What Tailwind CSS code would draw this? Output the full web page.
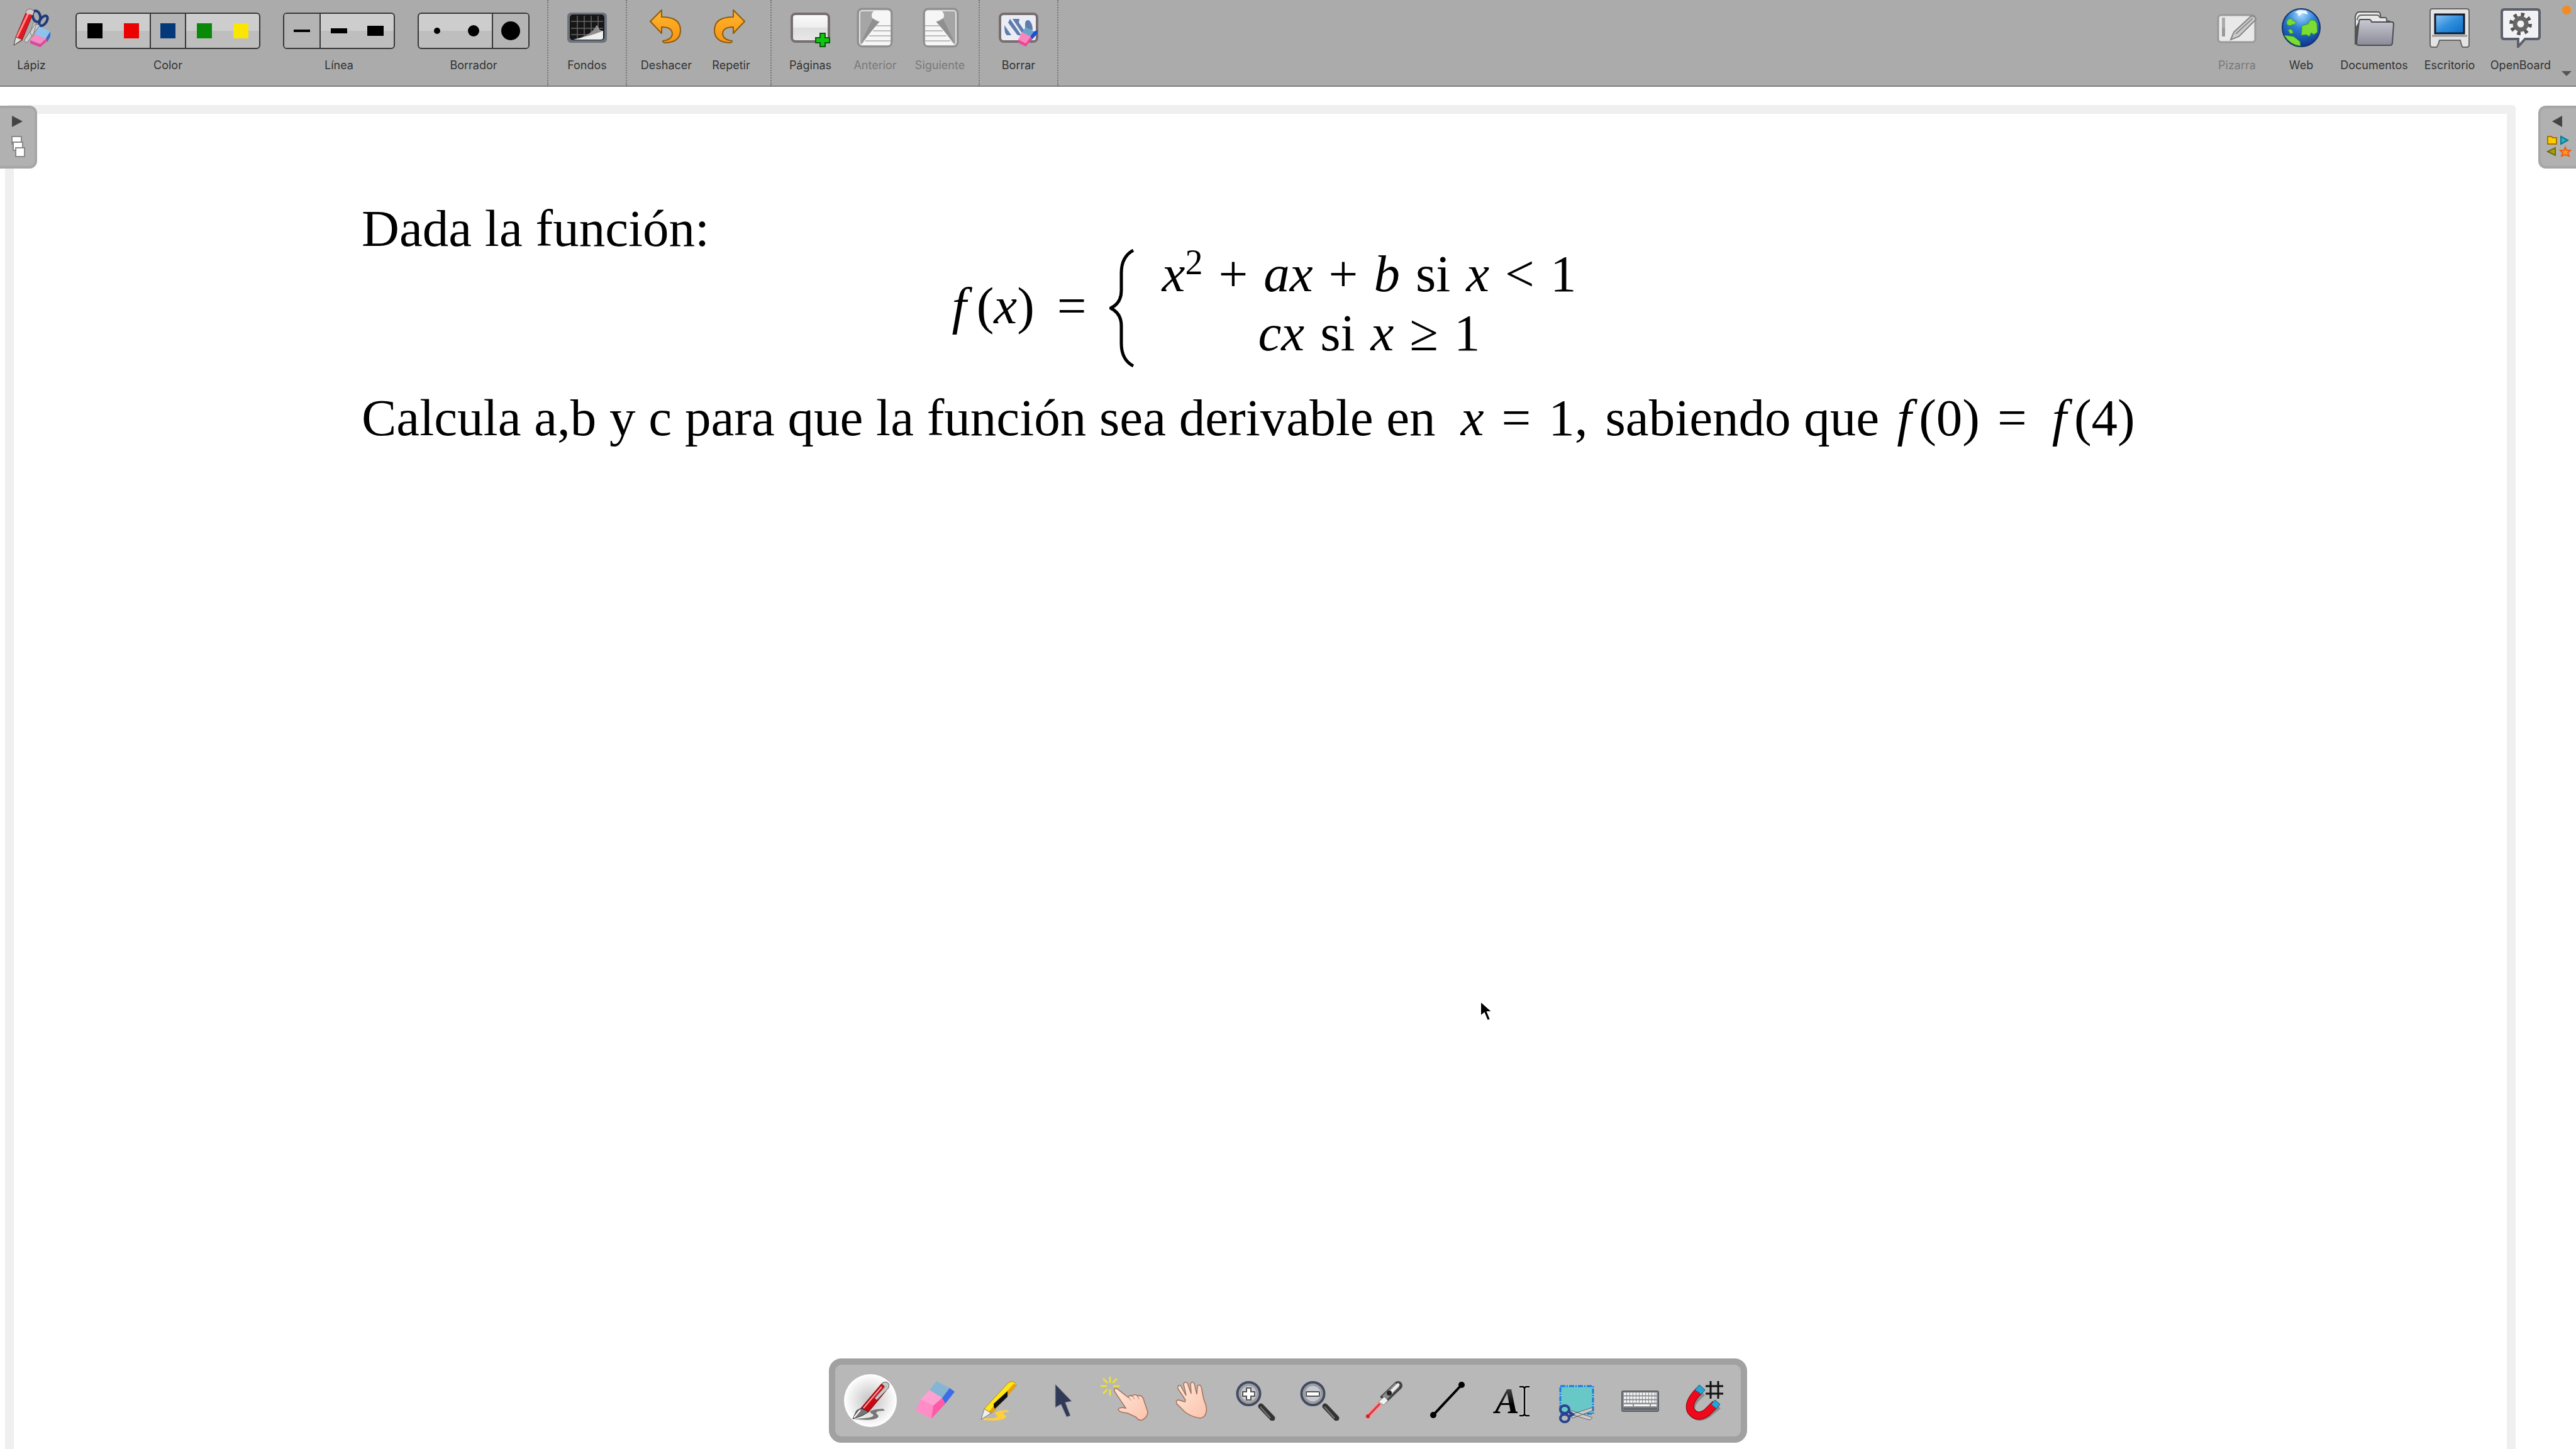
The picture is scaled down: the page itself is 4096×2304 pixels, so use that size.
<!DOCTYPE html>
<html lang="es">
<head>
<meta charset="utf-8">
<title>OpenBoard</title>
<script src="https://cdn.jsdelivr.net/npm/@tailwindcss/browser@4"></script>
</head>
<body class="bg-white font-['Inter','Liberation_Sans',sans-serif] text-[18px] leading-6 text-[#333]">
<svg class="absolute size-0" aria-hidden="true">
  <defs>
    <linearGradient id="orange" x1="0" y1="0" x2="0" y2="1"><stop offset="0" stop-color="#ffb52e"/><stop offset="1" stop-color="#f99410"/></linearGradient>
    <linearGradient id="paper" x1="0" y1="0" x2="0" y2="1"><stop offset="0" stop-color="#fbfbfb"/><stop offset=".5" stop-color="#ededed"/><stop offset=".51" stop-color="#dedede"/><stop offset="1" stop-color="#e8e8e8"/></linearGradient>
    <radialGradient id="ocean" cx=".5" cy=".15" r=".9"><stop offset="0" stop-color="#a8dcff"/><stop offset=".4" stop-color="#2c7fd6"/><stop offset="1" stop-color="#0b2f86"/></radialGradient>
    <linearGradient id="screen" x1="0" y1="0" x2="1" y2="1"><stop offset="0" stop-color="#8cc6f4"/><stop offset=".5" stop-color="#2f8fdd"/><stop offset="1" stop-color="#0c6ac6"/></linearGradient>
    <linearGradient id="folder" x1="0" y1="0" x2="0" y2="1"><stop offset="0" stop-color="#c9c9d2"/><stop offset="1" stop-color="#8b8b98"/></linearGradient>
    <linearGradient id="skin" x1="0" y1="0" x2="1" y2="1"><stop offset="0" stop-color="#ffe6d8"/><stop offset="1" stop-color="#fbc3ac"/></linearGradient>
    <linearGradient id="ink" x1="0" y1="0" x2="0" y2="1"><stop offset="0" stop-color="#666"/><stop offset=".6" stop-color="#000"/></linearGradient>
    <g id="sheet">
      <rect x="4" y="2" width="54" height="60" rx="7" fill="#aaa" stroke="#8f8f8f" stroke-width="3"/>
      <rect x="7" y="5" width="48" height="54" rx="4" fill="#a5a5a5" stroke="#e0e0e0" stroke-width="2"/>
      <path d="M30 5H52Q56 5 56 10V55Q56 60 52 60H9L37 22L27 17Q24 10 30 5Z" fill="#f6f6f6"/>
      <path d="M28 17Q32 24 39 22L8 58Z" fill="#8f8f8f"/>
      <path d="M33 29H56M28 37H56M22 45H56M16 53H56" stroke="#bcbcbc" stroke-width="2"/>
    </g>
    <path id="turn" d="M6 22L24 4V15Q54 15 54 36Q54 55 30 56Q26 56 26 53Q41 51 41 41Q40 31 24 31V41Z" fill="url(#orange)" stroke="#8c5c10" stroke-width="2" stroke-linejoin="round"/>
    <g id="lens">
      <path d="M41 41L59 60" stroke="#333" stroke-width="9" stroke-linecap="round"/>
      <path d="M40 42L56 60" stroke="#777" stroke-width="2"/>
      <circle cx="21.500" cy="21" r="18" fill="#c6c9d0" stroke="#434b63" stroke-width="4"/>
      <circle cx="21.500" cy="21" r="14" fill="none" stroke="#9a9a9a" stroke-width="3"/>
    </g>
  </defs>
</svg>

<div class="relative flex min-h-screen flex-col overflow-hidden">
  <header class="flex h-[138px] items-stretch border-b-2 border-[#7e7e7e] bg-[#ababab]">
    <button class="mr-5 flex w-[100px] flex-col items-center gap-4 pt-3">
      <svg class="size-16" viewBox="0 0 64 64">
        <ellipse cx="40" cy="14" rx="6" ry="9" fill="none" stroke="#1c3a7c" stroke-width="4" transform="rotate(-15 40 14)"/>
        <ellipse cx="51" cy="21" rx="5" ry="9" fill="none" stroke="#1c3a7c" stroke-width="4" transform="rotate(35 51 21)"/>
        <path d="M45 28L25 56L20 53L38 26ZM40 24L34 48L30 40L35 24Z" fill="#d0d0d0" stroke="#777"/>
        <path d="M25 4Q31 0 36 6L17 52L4 60L7 47Z" fill="#e01822" stroke="#8a1a1a"/>
        <path d="M29 5L9 47" stroke="#ff8a8a" stroke-width="3"/><path d="M7 47L17 51L4 60Z" fill="#ddd" stroke="#555"/>
        <path d="M25 4Q31 0 36 6L34 12L23 9Z" fill="#ccc"/>
        <path d="M44 30L62 38L57 50L37 43Z" fill="#8fc3ee"/><path d="M62 38V46L57 55L55 49Z" fill="#2e6bd0"/>
        <path d="M37 42L56 50L46 63L30 57V52Z" fill="#f58ac4"/><path d="M30 52L46 58L56 49L57 53L46 63L30 57Z" fill="#d24e98"/>
      </svg>
      Lápiz
    </button>
    <div class="mr-9 flex flex-col items-center gap-[14px] pt-5" role="group" aria-label="Color">
      <div class="flex h-[58px] overflow-hidden rounded-md border-2 border-[#383838] bg-linear-to-b from-[#cdcdcd] from-50% to-[#bebebe] to-50%">
        <button aria-label="Negro" class="flex w-[58px] items-center justify-center"><span class="size-6 bg-black"></span></button>
        <button aria-label="Rojo" class="flex w-[58px] items-center justify-center"><span class="size-6 bg-[#ec0000]"></span></button>
        <button aria-label="Azul" class="flex w-[58px] items-center justify-center border-x-2 border-[#383838] bg-[#b4b4b4]"><span class="size-6 bg-[#04387a]"></span></button>
        <button aria-label="Verde" class="flex w-[58px] items-center justify-center"><span class="size-6 bg-[#088a08]"></span></button>
        <button aria-label="Amarillo" class="flex w-[58px] items-center justify-center"><span class="size-6 bg-[#fae600]"></span></button>
      </div>
      <span>Color</span>
    </div>
    <div class="mr-9 flex flex-col items-center gap-[14px] pt-5" role="group" aria-label="Línea">
      <div class="flex h-[58px] overflow-hidden rounded-md border-2 border-[#383838] bg-linear-to-b from-[#cdcdcd] from-50% to-[#bebebe] to-50%">
        <button aria-label="Fina" class="flex w-[58px] items-center justify-center border-r-2 border-[#383838] bg-[#b4b4b4]"><span class="h-1 w-[26px] bg-black"></span></button>
        <button aria-label="Media" class="flex w-[58px] items-center justify-center"><span class="h-2 w-[26px] bg-black"></span></button>
        <button aria-label="Gruesa" class="flex w-[58px] items-center justify-center"><span class="h-4 w-[26px] bg-black"></span></button>
      </div>
      <span>Línea</span>
    </div>
    <div class="flex flex-col items-center gap-[14px] pt-5 pr-7" role="group" aria-label="Borrador">
      <div class="flex h-[58px] overflow-hidden rounded-md border-2 border-[#383838] bg-linear-to-b from-[#cdcdcd] from-50% to-[#bebebe] to-50%">
        <button aria-label="Pequeño" class="flex w-[58px] items-center justify-center"><span class="size-[10px] rounded-full bg-black"></span></button>
        <button aria-label="Mediano" class="flex w-[58px] items-center justify-center"><span class="size-[18px] rounded-full bg-black"></span></button>
        <button aria-label="Grande" class="flex w-[58px] items-center justify-center border-l-2 border-[#383838] bg-[#b4b4b4]"><span class="size-[30px] rounded-full bg-black"></span></button>
      </div>
      <span>Borrador</span>
    </div>
    <div class="flex border-l-2 border-dotted border-[#777]">
      <button class="flex w-[123px] flex-col items-center gap-4 pt-3">
        <svg class="size-16" viewBox="0 0 64 64">
          <rect y="8" width="63" height="48" rx="6" fill="#6c737d"/><rect x="4" y="11" width="55" height="41" rx="5" fill="#161616"/>
          <path d="M16 13V50M27 13V50M38 13V50M49 13V50M6 22H57M6 33H57M6 43H57" stroke="#666" stroke-width="1.500"/>
          <path d="M9 51Q38 46 47 28Q50 38 57 37V48Q57 51 53 51Z" fill="#eee"/><path d="M9 51Q38 46 47 28Q48 38 57 37Q38 45 9 51Z" fill="#8d8d8d"/>
        </svg>
        Fondos
      </button>
    </div>
    <div class="flex border-l-2 border-dotted border-[#777] px-[11px]">
      <button class="flex w-[103px] flex-col items-center gap-4 pt-3">
        <svg class="size-16" viewBox="0 0 64 64"><use href="#turn"/></svg>
        Deshacer
      </button>
      <button class="flex w-[103px] flex-col items-center gap-4 pt-3">
        <svg class="size-16" viewBox="0 0 64 64"><use href="#turn" transform="translate(59 0) scale(-1 1)"/></svg>
        Repetir
      </button>
    </div>
    <div class="flex border-l-2 border-dotted border-[#777] px-[10px]">
      <button class="flex w-[103px] flex-col items-center gap-4 pt-3">
        <svg class="size-16" viewBox="0 0 64 64">
          <rect x="2" y="10" width="59" height="44" rx="6" fill="url(#paper)" stroke="#776e70" stroke-width="4"/>
          <path d="M47 41H55V48H62V56H55V62H47V56H40V48H47Z" fill="#0ec80e" stroke="#0a5a0a" stroke-width="2"/>
        </svg>
        Páginas
      </button>
      <button class="flex w-[103px] flex-col items-center gap-4 pt-3 text-[#7a7a7a]" disabled>
        <svg class="size-16" viewBox="0 0 64 64"><use href="#sheet"/></svg>
        Anterior
      </button>
      <button class="flex w-[103px] flex-col items-center gap-4 pt-3 text-[#7a7a7a]" disabled>
        <svg class="size-16" viewBox="0 0 64 64"><use href="#sheet" transform="translate(64 0) scale(-1 1)"/></svg>
        Siguiente
      </button>
    </div>
    <div class="flex border-x-2 border-dotted border-[#777]">
      <button class="flex w-[123px] flex-col items-center gap-4 pt-3">
        <svg class="size-16" viewBox="0 0 64 64">
          <rect x="2" y="10" width="59" height="44" rx="6" fill="#ebecf4" stroke="#776e70" stroke-width="4"/>
          <path d="M9 28L20 44H13Q9 42 9 28ZM15 24L18 18L36 44H30ZM22 18H33L32 24L41 37L38 42ZM42 26Q42 19 48 20Q54 25 54 36L42 33Z" fill="#5e7cac"/>
          <path d="M43 31L56 38L50 46L37 40Z" fill="#6ba3c8"/><path d="M56 38L62 36L61 42L52 52L50 46Z" fill="#1a4fd0"/>
          <path d="M37 39L51 46L43 58L31 51Z" fill="#fa86bd"/><path d="M31 51L43 57L51 46L53 50L43 62L31 56Z" fill="#e84898"/>
        </svg>
        Borrar
      </button>
    </div>
    <div class="ml-auto flex">
      <button class="flex w-[102px] flex-col items-center gap-4 pt-3 text-[#7a7a7a]" disabled>
        <svg class="size-16" viewBox="0 0 64 64">
          <rect x="2" y="12" width="59" height="43" rx="5" fill="#e9e9e9" stroke="#999" stroke-width="3"/>
          <rect x="8" y="16" width="5" height="30" fill="#aaa"/><rect x="8" y="32" width="5" height="14" fill="#999"/>
          <path d="M22 51L27 39L54 14Q60 12 62 19L35 46Z" fill="#ccc" stroke="#858585" stroke-width="2"/><path d="M30 42L57 17" stroke="#8b8b8b" stroke-width="2"/>
        </svg>
        Pizarra
      </button>
      <button class="flex w-[102px] flex-col items-center gap-4 pt-3">
        <svg class="size-16" viewBox="0 0 64 64">
          <circle cx="32" cy="32" r="30" fill="url(#ocean)" stroke="#16336e" stroke-width="2"/>
          <path d="M9 26Q8 21 12 18Q18 17 19 21L24 22Q23 28 18 27Q13 31 9 26ZM33 29L43 26L46 20H53L57 25L58 39L52 43L48 40L45 46L40 43L32 44L33 36ZM11 36L16 34L20 40L15 42ZM5 44L20 46L30 54L31 61Q15 60 5 44Z" fill="#7cdc32" stroke="#2f9a2a"/>
          <path d="M22 8L28 4L40 5L43 11L34 9L28 14L26 9Z" fill="#eef8ff"/>
        </svg>
        Web
      </button>
      <button class="flex w-[130px] flex-col items-center gap-4 pt-3">
        <svg class="size-16" viewBox="0 0 64 64">
          <path d="M2 58V14Q4 7 8 7H38Q42 7 42 13V16H50Q52 16 52 21L57 22V40H8V54Z" fill="#e8e8e8" stroke="#555" stroke-width="2"/>
          <path d="M5 20Q6 12 12 12H38L42 16" fill="none" stroke="#666" stroke-width="2"/>
          <path d="M2 32L8 22V58H2Z" fill="#555"/>
          <path d="M8 22Q8 19 11 19H24Q27 19 28 23H60Q63 23 63 26L61 56Q61 60 57 60H8Q4 60 4 56Z" fill="url(#folder)" stroke="#4c4c55" stroke-width="2"/>
        </svg>
        Documentos
      </button>
      <button class="flex w-[110px] flex-col items-center gap-4 pt-3">
        <svg class="size-16" viewBox="0 0 64 64">
          <path d="M1 6Q1 2 5 2H59Q63 2 63 6V59Q63 63 59 63H53Q51 62 49 52H16Q13 62 11 63H5Q1 63 1 59Z" fill="#e3e3e3" stroke="#666" stroke-width="2"/>
          <path d="M4 45H60" stroke="#999" stroke-width="3"/><rect x="9" y="11" width="46" height="30" fill="url(#screen)" stroke="#111a2a" stroke-width="3"/>
        </svg>
        Escritorio
      </button>
      <button class="flex w-[116px] flex-col items-center gap-4 pt-3">
        <svg class="size-16" viewBox="0 0 64 64">
          <path d="M2 7Q2 3 6 3H58Q62 3 62 7V46Q62 50 58 50H39L28 62V50H6Q2 50 2 46Z" fill="#f2f2f4" stroke="#5c606c" stroke-width="4"/>
          <circle cx="32" cy="26" r="14" fill="none" stroke="#555" stroke-width="8" stroke-dasharray="5 6"/>
          <circle cx="32" cy="26" r="9" fill="none" stroke="#666" stroke-width="7"/>
        </svg>
        OpenBoard
      </button>
      <div class="flex w-[30px] flex-col items-center justify-between pt-[9px] pb-[15px]">
        <span class="size-[14px] rounded-full bg-[#f58a1f]"></span>
        <svg class="h-2 w-4" viewBox="0 0 16 8"><path d="M0 0H16L8 8Z" fill="#555"/></svg>
      </div>
    </div>
  </header>

  <main class="flex flex-1 pt-[29px] pr-24 pl-2">
    <article class="flex-1 rounded-t-md border-x-[14px] border-t-[14px] border-[#efefef] px-[553px] pt-[157px] font-['Liberation_Serif',serif] text-[83px] leading-[50px] text-black">
      <p>Dada la función:</p>
      <div class="flex justify-center gap-9 leading-[94px]">
        <div class="flex items-center gap-9 pl-3"><span><i class="mr-4">f</i>(<i>x</i>)</span><span>=</span></div>
        <svg class="h-[188px] w-10 self-end" viewBox="0 0 40 188"><path d="M38 2Q19 12 19 38V66Q19 86 2 94Q19 102 19 122V150Q19 176 38 186" fill="none" stroke="#000" stroke-width="5"/></svg>
        <div class="flex flex-col items-center pb-2 pl-2">
          <div class="flex gap-[25px]"><span class="flex"><i>x</i><sup class="top-0 text-[56px] leading-[58px]">2</sup></span><span>+</span><i>ax</i><span>+</span><i>b</i><span>si</span><i>x</i><span>&lt;</span><span>1</span></div>
          <div class="flex gap-[25px]"><i>cx</i><span>si</span><i>x</i><span>≥</span><span>1</span></div>
        </div>
      </div>
      <p class="flex gap-7 pt-[55px] whitespace-nowrap"><span>Calcula a,b y c para que la función sea derivable en</span><i class="pl-3">x</i><span>=</span><span>1,</span><span>sabiendo que</span><span><i class="mr-3">f</i>(0)</span><span>=</span><span class="pl-3"><i class="mr-3">f</i>(4)</span></p>
    </article>
  </main>

  <button aria-label="Abrir páginas" class="absolute top-[168px] left-0 h-[100px] w-[59px] rounded-r-xl border-4 border-l-0 border-[#a6a6a6] bg-[#b1b1b1]">
    <svg class="h-[92px] w-[55px]" viewBox="0 4 55 92">
      <path d="M19 16L36 25L19 34Z" fill="#444"/>
      <g fill="#fff" stroke="#888" stroke-width="2"><rect x="19" y="49" width="15" height="12"/><rect x="21" y="58" width="15" height="13"/><rect x="25" y="67" width="14" height="14"/></g>
    </svg>
  </button>
  <button aria-label="Abrir biblioteca" class="absolute top-[168px] right-0 h-[100px] w-[60px] rounded-l-xl border-4 border-r-0 border-[#a6a6a6] bg-[#b1b1b1]">
    <svg class="h-[92px] w-14" viewBox="4 4 56 92">
      <path d="M38 16L22 25L38 34Z" fill="#444"/>
      <path d="M15 49H21L23 51H29V61H15Z" fill="#fc0" stroke="#a87400" stroke-width="2"/>
      <path d="M36 49L47 55L36 61Z" fill="#2ab4cc" stroke="#0a7890" stroke-width="2"/>
      <path d="M27 67V79L15 73Z" fill="#a8a010" stroke="#706a08" stroke-width="2"/>
      <path d="M43 66L45 71H51L47 75L49 80L43 78L37 80L39 75L35 71H41Z" fill="#ff9a20" stroke="#f05a18" stroke-width="2"/>
    </svg>
  </button>

  <svg class="absolute top-[1590px] left-[2352px] h-9 w-6" viewBox="0 0 24 36"><path d="M2 2V26L8 21L13 33L18 31L13 19H21Z" fill="#000" stroke="#fff" stroke-width="2"/></svg>

  <nav aria-label="Herramientas" class="absolute bottom-[10px] left-1/2 flex h-[134px] -translate-x-1/2 items-center rounded-[20px] border-[10px] border-[#a1a1a1] bg-[#b8b8b8] pr-[7px] pl-[5px]">
    <button aria-label="Lápiz" class="flex w-[102px] justify-center"><span class="flex size-[84px] items-center justify-center rounded-full bg-radial from-[#c2c2c2] to-white to-70%">
      <svg class="size-16" viewBox="0 0 64 64">
        <path d="M4 61Q42 60 36 54Q22 47 52 45L55 48Q34 48 45 56Q44 66 4 61Z" fill="#777"/>
        <path d="M17 44L50 5Q56 0 61 5Q63 10 58 15L29 50Z" fill="#c40a16" stroke="#7a0610"/><path d="M21 44L50 10" stroke="#ff9d9d" stroke-width="2"/>
        <path d="M50 5Q56 0 61 5Q63 10 58 15L42 31L39 28L55 10Z" fill="#c4c4c4" stroke="#777"/><path d="M17 44L29 50L19 56L4 61L10 48Z" fill="#777" stroke="#333"/><path d="M16 47L6 59" stroke="#fff" stroke-width="2"/>
      </svg></span></button>
    <button aria-label="Goma" class="flex w-[102px] justify-center"><svg class="size-16" viewBox="0 0 64 64">
      <path d="M35 1L56 12L44 28L24 15Z" fill="#85b5d2"/><path d="M56 12L64 18L49 37L44 28Z" fill="#3c6ce8"/><path d="M24 15L44 28L30 40L10 30Z" fill="#ffa0d2"/><path d="M10 30L30 40L27 61L2 48Z" fill="#ff8cc6"/><path d="M44 28L49 37L27 61L30 40Z" fill="#ff5aa8"/></svg></button>
    <button aria-label="Resaltador" class="flex w-[102px] justify-center"><svg class="size-16" viewBox="0 0 64 64">
      <path d="M8 60Q32 61 30 56Q18 49 45 47L50 50Q32 50 44 56Q44 66 8 63Z" fill="#ffd03a"/>
      <path d="M9 45L48 3Q58 -1 60 8L20 53Z" fill="#ffe61a" stroke="#b08a00"/><path d="M60 8L20 53L16 50L56 5Z" fill="#eca008"/><path d="M46 17V26L26 45L24 42V37Z" fill="#111"/><path d="M9 45L20 52L4 62Z" fill="#eee" stroke="#777"/></svg></button>
    <button aria-label="Seleccionar" class="flex w-[102px] justify-center"><svg class="size-16" viewBox="0 0 64 64"><path d="M20 6L46 33L36 35L44 56L38 58L29 38L20 43Z" fill="#303a56" stroke="#8f939e"/></svg></button>
    <button aria-label="Interactuar" class="flex w-[102px] justify-center"><svg class="size-16 overflow-visible" viewBox="0 0 64 64">
      <path d="M12 17Q11 12 16 13L34 27Q36 22 40 25Q45 20 49 25Q55 22 58 29L65 50Q65 58 56 63Q50 64 46 58L33 52Q20 51 18 46Q20 42 30 44Z" fill="url(#skin)" stroke="#a3705c" stroke-width="1.500"/>
      <path d="M35 27L38 32M41 25L44 30M49 25L51 30" stroke="#b98670" fill="none"/>
      <path d="M5 -6V4M5 14V24M-10 9H0M10 9H20M-6 -3L1 4M9 4L16 -3M-6 21L1 14" stroke="#f0e428" stroke-width="2.500"/></svg></button>
    <button aria-label="Desplazar" class="flex w-[102px] justify-center"><svg class="size-16" viewBox="0 0 64 64">
      <path d="M11 13Q10 7 15 8L24 24L20 6Q21 1 26 4L32 21L31 5Q34 0 37 5L41 22L42 9Q46 5 48 10L52 30Q58 44 56 50Q55 58 47 60Q32 58 22 50L9 37Q7 31 12 31L22 34L23 31Z" fill="url(#skin)" stroke="#a3705c" stroke-width="1.500"/></svg></button>
    <button aria-label="Acercar" class="flex w-[102px] justify-center"><svg class="size-16" viewBox="0 0 64 64"><use href="#lens"/><path d="M18 12H25V18H31V25H25V31H18V25H12V18H18Z" fill="#fff" stroke="#555" stroke-width="2"/></svg></button>
    <button aria-label="Alejar" class="flex w-[102px] justify-center"><svg class="size-16" viewBox="0 0 64 64"><use href="#lens"/><rect x="11" y="18" width="21" height="7" rx="1" fill="#fff" stroke="#555" stroke-width="2"/></svg></button>
    <button aria-label="Puntero láser" class="flex w-[102px] justify-center"><svg class="size-16" viewBox="0 0 64 64">
      <path d="M26 37L7 57" stroke="#f09a9a" stroke-width="8" stroke-linecap="round"/><path d="M26 37L7 57" stroke="#d8303c" stroke-width="3"/><circle cx="7" cy="57" r="3" fill="#d0202c"/>
      <path d="M31 31L55 8" stroke="#444" stroke-width="14"/><circle cx="55" cy="8" r="7" fill="#444"/>
      <path d="M33 28L54 7" stroke="#8a8a8a" stroke-width="9"/><path d="M43 19L55 7" stroke="#ececec" stroke-width="5" stroke-linecap="round"/>
      <path d="M33 26L39 32L32 39L24 34Z" fill="#f0f0f0" stroke="#888"/><circle cx="41" cy="20" r="4" fill="#222"/></svg></button>
    <button aria-label="Línea recta" class="flex w-[102px] justify-center"><svg class="size-16" viewBox="0 0 64 64"><path d="M9 55L54 7" stroke="#000" stroke-width="4"/><circle cx="9" cy="55" r="5"/><circle cx="54" cy="7" r="5"/></svg></button>
    <button aria-label="Texto" class="flex w-[102px] justify-center"><svg class="size-16" viewBox="0 0 64 64"><text x="5" y="52" font-family="Liberation Serif, serif" font-size="58" font-style="italic" font-weight="bold" fill="url(#ink)">A</text><path d="M52 11V55M44 10H50L52 12L54 10H60M44 56H50L52 54L54 56H60" fill="none" stroke="#ddd" stroke-width="5"/><path d="M52 11V55M44 10H50L52 12L54 10H60M44 56H50L52 54L54 56H60" fill="none" stroke="#000" stroke-width="2.500"/></svg></button>
    <button aria-label="Capturar" class="flex w-[102px] justify-center"><svg class="size-16 overflow-visible" viewBox="0 0 64 64">
      <rect x="7" y="9" width="52" height="44" fill="#68c8c8" stroke="#1d78e0" stroke-width="3" stroke-dasharray="8 2 2 2"/>
      <path d="M22 55L58 43L58 48L26 60ZM22 47L58 59L54 63L24 54Z" fill="#ccc" stroke="#666"/><ellipse cx="14" cy="46" rx="7" ry="6" fill="none" stroke="#2a4390" stroke-width="4"/><ellipse cx="14" cy="60" rx="7" ry="6" fill="none" stroke="#2a4390" stroke-width="4"/><path d="M20 49L27 54L20 58" fill="none" stroke="#2a4390" stroke-width="4"/></svg></button>
    <button aria-label="Teclado" class="flex w-[102px] justify-center"><svg class="size-16" viewBox="0 0 64 64">
      <rect x="3" y="17" width="58" height="32" rx="2" fill="#8b8e92" stroke="#5b5f66" stroke-width="2"/>
      <path d="M6 21.500H58M6 27.500H58M6 33.500H58" stroke="#f4f4f4" stroke-width="4" stroke-dasharray="4 1"/><path d="M6 39.500H20M22 39.500H47M49 39.500H58" stroke="#f4f4f4" stroke-width="3"/><path d="M5 45H59" stroke="#65686e" stroke-width="4"/></svg></button>
    <button aria-label="Ajustar a cuadrícula" class="flex w-[102px] justify-center"><svg class="size-16 overflow-visible" viewBox="0 0 64 64">
      <path d="M27 17Q4 36 11 49Q21 62 36 51L52 38" transform="translate(2 2)" fill="none" stroke="#8c8c8c" stroke-width="12"/>
      <path d="M24 16Q4 36 11 49Q21 62 36 51L50 37" fill="none" stroke="#7c0812" stroke-width="13"/><path d="M24 16Q4 36 11 49Q21 62 36 51L50 37" fill="none" stroke="#f0081c" stroke-width="11"/>
      <path d="M24 7L33 15L27 22L17 15ZM49 31L57 38L51 45L43 38Z" fill="#22a6d8" stroke="#145a78"/>
      <path d="M42 1V29M54 1V29M34 9H62M34 21H62" stroke="#111" stroke-width="3"/></svg></button>
  </nav>
</div>
</body>
</html>
